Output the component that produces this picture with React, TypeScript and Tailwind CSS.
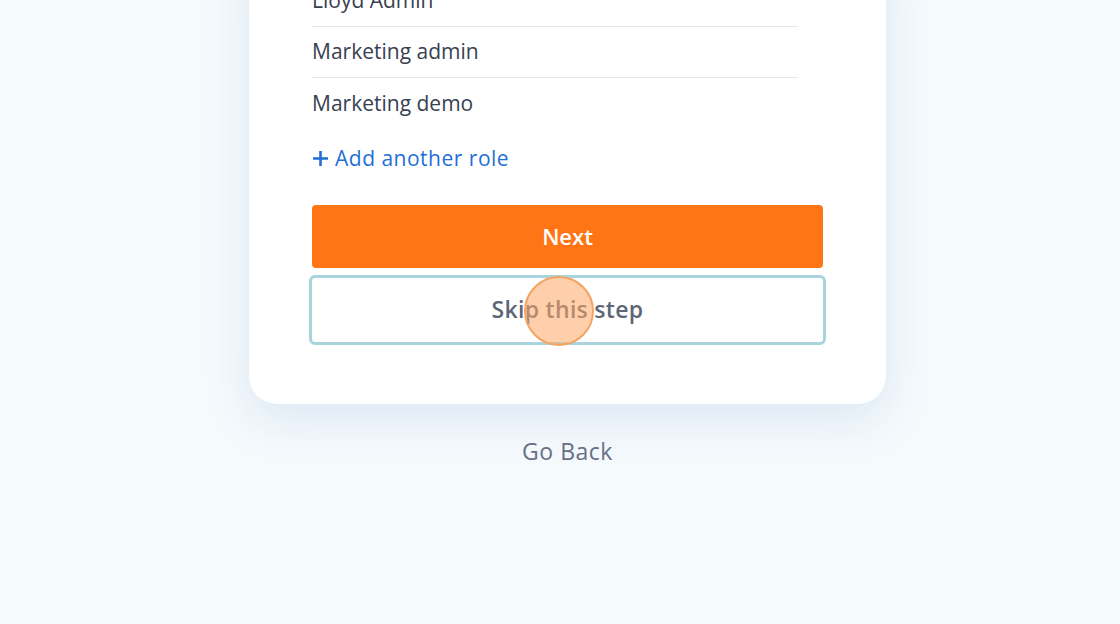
const roles = ['Lloyd Admin', 'Marketing admin', 'Marketing demo'];

const font = { fontFamily: '"Open Sans", "Noto Sans", sans-serif' };

export default function App() {
  return (
    <div
      className="flex h-[624px] w-full flex-col items-center overflow-hidden bg-[#f5fafd] pl-[15px]"
      style={font}
    >
      <div className="-mt-[60px] w-[637px] rounded-[28px] bg-white px-[63px] pb-[59px] pt-[36px] shadow-[0_16px_48px_rgba(60,110,170,0.13)]">
        <ul className="w-[486px]">
          {roles.map((role, i) => (
            <li
              key={role}
              className={
                'flex h-[51px] items-center text-[21px] text-[#374151] ' +
                (i < roles.length - 1 ? 'border-b border-[#e4e6ea]' : '')
              }
            >
              {role}
            </li>
          ))}
        </ul>

        <button className="mt-[14px] flex items-center gap-[6px] text-[21px] tracking-[0.5px] text-[#1f6fd6]">
          <svg width="17" height="17" viewBox="0 0 17 17" fill="none">
            <path d="M8.5 1v15M1 8.5h15" stroke="#1f6fd6" strokeWidth="2.6" />
          </svg>
          Add another role
        </button>

        <button className="mt-[30px] flex h-[63px] w-full items-center justify-center rounded-[4px] bg-[#ff7414] text-[22px] font-semibold text-white">
          Next
        </button>

        <div className="relative mt-[7px] -mx-[3px]">
          <button className="flex h-[70px] w-full items-center justify-center rounded-[6px] border-[3px] border-[#a9d4de] bg-white text-[23px] font-semibold tracking-[0.3px] text-[#5d6677]">
            Skip this step
          </button>
          <span className="pointer-events-none absolute left-[215px] top-[1px] h-[70px] w-[70px] rounded-full border-2 border-[#f3a463] bg-[#ffa866]/55" />
        </div>
      </div>

      <button className="mt-[30px] text-[23px] tracking-[0.5px] text-[#667085]">Go Back</button>
    </div>
  );
}
